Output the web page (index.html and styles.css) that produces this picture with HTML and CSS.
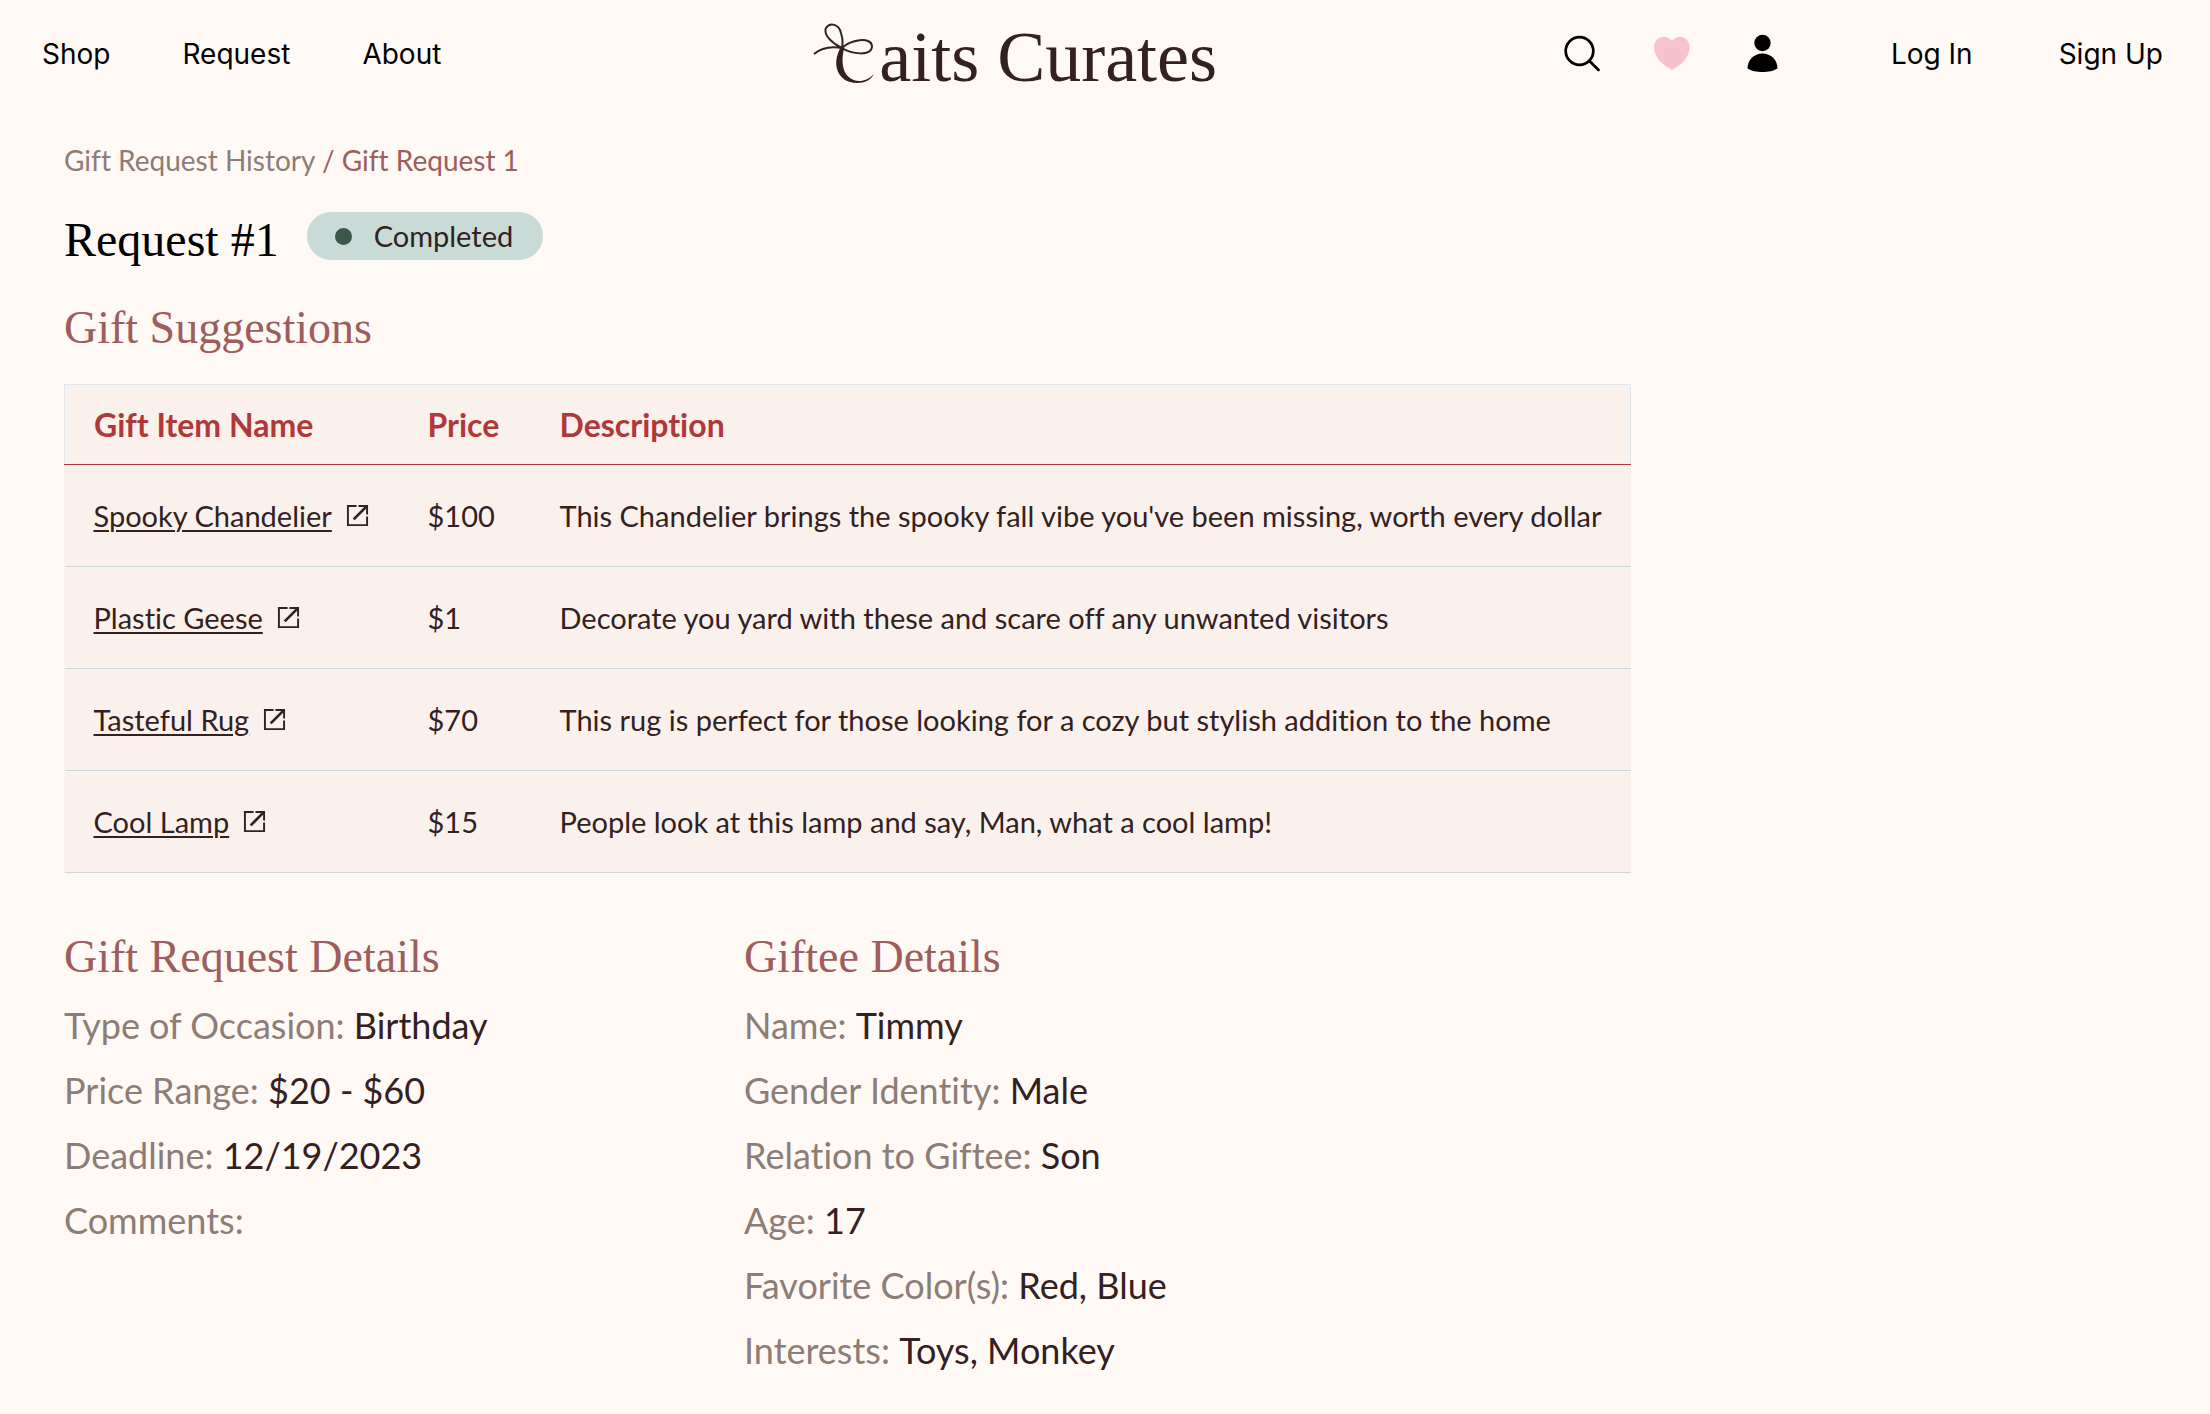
FILE: index.html
```html
<!DOCTYPE html>
<html lang="en">
<head>
<meta charset="utf-8">
<title>Caits Curates - Gift Request 1</title>
<link rel="stylesheet" href="styles.css">
</head>
<body>
<svg class="sprite" aria-hidden="true">
  <symbol id="icon-open" viewBox="0 0 24 24"><path fill="currentColor" d="M1 1h10v2H3v18h18v-8h2v10H1zM13 1h10v10h-2V5L9 17l-2-2L19 3h-6z"/></symbol>
</svg>
<header class="site-header">
  <nav class="nav">
    <a href="#">Shop</a>
    <a href="#">Request</a>
    <a href="#">About</a>
  </nav>
  <a class="logo" href="#" aria-label="Caits Curates">
    <svg class="logo-bow" viewBox="0 0 62 62" aria-hidden="true" fill="none" stroke="#33211f">
      <path stroke-width="2" d="M1 31C8 25 18 23 29 25C20 21 10 12 13 5C17 -1 26 1 28 10C30 16 30 20 29 25C37 17 58 13 59 23C59 34 38 31 29 25"/>
      <path fill="#33211f" stroke="none" d="M28 24C18 40 24 60 44 60C52 60 58 57 61 51C55 57 50 58 46 58C31 57 27 42 31 26Z"/>
    </svg>
    <span class="logo-text">aits Curates</span>
  </a>
  <div class="actions">
    <div class="tools">
      <button type="button" aria-label="Search"><svg width="40" height="40" viewBox="0 0 40 40" fill="none" stroke="#000" stroke-width="2.7" stroke-linecap="round"><circle cx="18.5" cy="17" r="13.8"/><path d="M28.5 27l9 9"/></svg></button>
      <button type="button" aria-label="Favorites"><svg width="40" height="40" viewBox="0 0 40 40" fill="#f6c2ce"><path d="M21 36C13 32 3 24 3 13C3 3 15 -1 21 7C27 -1 38.500 3 38.500 13C38.500 24 29 32 21 36Z"/></svg></button>
      <button type="button" aria-label="Account"><svg width="40" height="40" viewBox="0 0 40 40"><circle cx="21.500" cy="9" r="8.200"/><path d="M6.500 34.500C6.500 26 13 19.500 21.500 19.500S36.500 26 36.500 34.500C33 37 27 38 21.500 38S10 37 6.500 34.500Z"/></svg></button>
    </div>
    <nav class="account">
      <a href="#">Log In</a>
      <a href="#">Sign Up</a>
    </nav>
  </div>
</header>
<main class="page">
  <nav class="crumbs" aria-label="Breadcrumb"><a href="#">Gift Request History</a> <span class="current">/ Gift Request 1</span></nav>
  <div class="title-row">
    <h1>Request #1</h1>
    <span class="status"><i class="dot"></i>Completed</span>
  </div>
  <h2>Gift Suggestions</h2>
  <table class="gifts">
    <thead><tr><th class="col-name">Gift Item Name</th><th class="col-price">Price</th><th>Description</th></tr></thead>
    <tbody>
      <tr><td><a href="#"><span>Spooky Chandelier</span><svg><use href="#icon-open"/></svg></a></td><td>$100</td><td>This Chandelier brings the spooky fall vibe you've been missing, worth every dollar</td></tr>
      <tr><td><a href="#"><span>Plastic Geese</span><svg><use href="#icon-open"/></svg></a></td><td>$1</td><td>Decorate you yard with these and scare off any unwanted visitors</td></tr>
      <tr><td><a href="#"><span>Tasteful Rug</span><svg><use href="#icon-open"/></svg></a></td><td>$70</td><td>This rug is perfect for those looking for a cozy but stylish addition to the home</td></tr>
      <tr><td><a href="#"><span>Cool Lamp</span><svg><use href="#icon-open"/></svg></a></td><td>$15</td><td>People look at this lamp and say, Man, what a cool lamp!</td></tr>
    </tbody>
  </table>
  <div class="details">
    <section>
      <h2>Gift Request Details</h2>
      <dl>
        <div><dt>Type of Occasion:</dt> <dd>Birthday</dd></div>
        <div><dt>Price Range:</dt> <dd>$20 - $60</dd></div>
        <div><dt>Deadline:</dt> <dd>12/19/2023</dd></div>
        <div><dt>Comments:</dt> <dd></dd></div>
      </dl>
    </section>
    <section>
      <h2>Giftee Details</h2>
      <dl>
        <div><dt>Name:</dt> <dd>Timmy</dd></div>
        <div><dt>Gender Identity:</dt> <dd>Male</dd></div>
        <div><dt>Relation to Giftee:</dt> <dd>Son</dd></div>
        <div><dt>Age:</dt> <dd>17</dd></div>
        <div><dt>Favorite Color(s):</dt> <dd>Red, Blue</dd></div>
        <div><dt>Interests:</dt> <dd>Toys, Monkey</dd></div>
      </dl>
    </section>
  </div>
</main>
</body>
</html>
```
FILE: styles.css
```css
* { box-sizing: border-box; }
body {
  margin: 0;
  background: #fff9f5;
  color: #33211f;
  font-family: Lato, "Open Sans", sans-serif;
  font-size: 28px;
  line-height: 40px;
  font-variant-ligatures: none;
}
a { color: inherit; text-decoration: none; }
h1, h2, dl, dd { margin: 0; }
.sprite { position: absolute; width: 0; height: 0; }

.site-header {
  display: flex;
  justify-content: space-between;
  align-items: center;
  height: 108px;
  padding: 0 47px 0 42px;
  color: #000;
  font-family: Inter, sans-serif;
}
.nav { display: flex; gap: 72px; }
.actions { display: flex; align-items: center; gap: 110px; }
.account { display: flex; gap: 86px; }
.logo { display: flex; align-items: flex-end; gap: 4px; margin-left: 28px; color: #33211f; }
.logo-bow { width: 62px; height: 62px; }
.logo-text { font: 72px/56px "Liberation Serif", serif; }
.tools { display: flex; gap: 50px; }
.tools button { width: 40px; height: 40px; padding: 0; border: 0; background: none; }
.tools svg { display: block; }

.page { padding: 32px 64px; }
.crumbs { color: #8c7d76; }
.current { color: #9e5d5d; }
.title-row { display: flex; align-items: flex-start; gap: 28px; margin-top: 32px; }
h1, h2 {
  font-family: "Liberation Serif", serif;
  font-weight: 400;
  font-size: 46px;
  line-height: 56px;
}
h1 { color: #000; font-size: 48px; }
h2 { color: #9e5d5d; }
.title-row + h2 { margin-top: 32px; }
.status {
  display: flex;
  align-items: center;
  gap: 22px;
  height: 48px;
  padding: 0 30px 0 28px;
  border-radius: 24px;
  background: #c8dbd6;
  font-size: 29px;
}
.dot { width: 17px; height: 17px; border-radius: 50%; background: #3a574a; }

.gifts {
  width: 1567px;
  max-width: 100%;
  margin-top: 28px;
  border-collapse: collapse;
  background: #faf1ec;
  font-size: 29px;
}
.gifts thead { border: 1px solid #e2e5e9; border-bottom: 1px solid #b0383a; }
th, td { padding: 0 0 0 29px; text-align: left; }
th { height: 80px; color: #b0383a; font-size: 32px; font-weight: 700; }
td { height: 102px; border-bottom: 1px solid #cfd4d8; }
.col-name { width: 334px; }
.col-price { width: 132px; }
td a { display: flex; align-items: center; gap: 14px; }
td a span { text-decoration: underline; text-decoration-thickness: 2px; text-underline-offset: 3px; }
td svg { width: 23px; height: 23px; }

.details { display: grid; grid-template-columns: 680px 1fr; margin-top: 56px; }
dl { margin-top: 8px; font-size: 36px; }
dl div { line-height: 65px; }
dt, dd { display: inline; }
dt { color: #8c7d76; }
```
